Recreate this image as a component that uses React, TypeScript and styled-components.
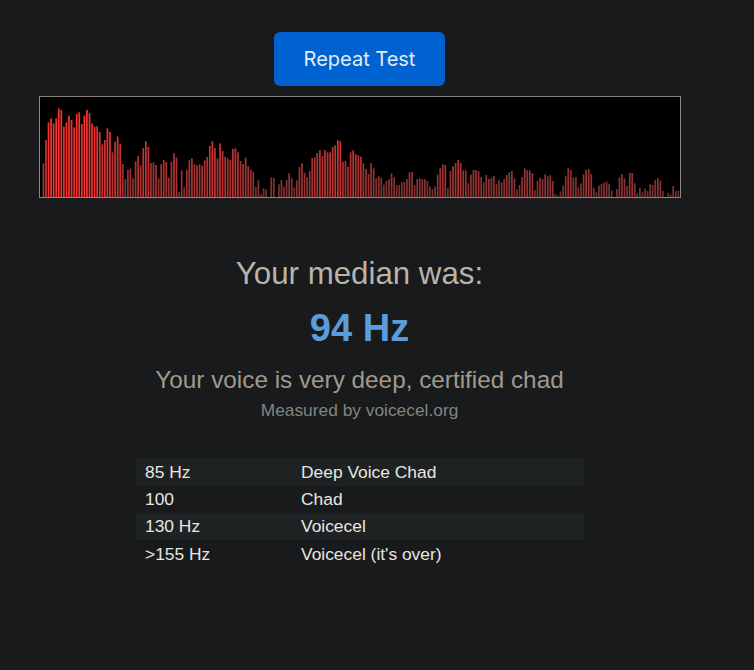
import React from "react";
import styled, { createGlobalStyle } from "styled-components";

const GlobalStyle = createGlobalStyle`
  html, body { margin: 0; padding: 0; background: #181a1b; }
  body { font-family: "Liberation Sans", Arial, sans-serif; }
`;

const tops1 = [220,150,97,85,100,85,55,60,110,97,77,90,112,72,67,102,77,60,70,100,110,109,126,163,150,115,126,187,155,139,162,222,268,239,235,265,214,198,226,174,154,171,219,217,225,265,223,210,216,264,216,189,203,306,241,292,240,211,205,223,226,223,227,211,201,167,154,174,205,160,183,200,205,210,177,175,187,213,222,203,228];
const tops2 = [238,245,291,271,312,295,298,321,262,264,321,283,270,290,270,250,265,292,271,231,220,248,262,243,204,202,189,180,198,180,187,187,171,166,150,154,215,213,230,187,181,192,196,200,220,237,252,220,235,265,259,263,284,273,268,250,262,286,285,277,275,267,247,246,285,267,265,268,268,273,289,297,289,254,235,223,225,295,243,228,219,210,219,241,241,280];
const tops3 = [254,240,240,244,261,277,255,267,263,258,282,271,277,267,255,247,243,265,298,285,261,235,241,241,249,300,272,263,267,253,259,256,273,312,317,304,287,259,235,240,263,262,292,280,253,240,237,252,294,307,287,282,278,275,281,301,321,297,262,252,265,288,249,249,280,310,294,307,296,303,283,285,270,264,271,303,321,309,313,288,303,303];
const heights = [321, ...tops1, ...tops2, ...tops3].map((t) => (321 - t) / 3);

const rows = [
  ["85 Hz", "Deep Voice Chad"],
  ["100", "Chad"],
  ["130 Hz", "Voicecel"],
  [">155 Hz", "Voicecel (it's over)"],
];

const Page = styled.main`
  width: 754px;
  height: 670px;
  overflow: hidden;
  background: #181a1b;
  display: flex;
  flex-direction: column;
  padding-top: 32px;
  box-sizing: border-box;
`;
const Centered = styled.div`
  width: 719px;
  display: flex;
  flex-direction: column;
  align-items: center;
`;
const RepeatButton = styled.button`
  width: 171px;
  height: 54px;
  border: 0;
  border-radius: 6px;
  background: #0062d1;
  color: #e3ebf3;
  font: 400 20px Inter, sans-serif;
  padding: 0;
`;
const Scope = styled.div`
  align-self: flex-start;
  margin: 10px 0 0 39px;
  width: 640px;
  height: 100px;
  border: 1px solid #8f877c;
  background: #000;
  line-height: 0;
`;
const ResultCard = styled.section`
  margin-top: 22px;
  width: 603px;
  height: 402px;
  box-sizing: border-box;
  border: 1px solid #17191a;
  border-radius: 6px;
  padding-top: 35px;
  display: flex;
  flex-direction: column;
  align-items: center;
`;
const Heading = styled.h2`
  margin: 0;
  height: 36px;
  font: 400 31.25px/36px "Liberation Sans", Arial, sans-serif;
  color: #b9b4ab;
`;
const Value = styled.div`
  margin-top: 15px;
  height: 42px;
  font: 700 38px/42px "Liberation Sans", Arial, sans-serif;
  color: #5a9cdc;
`;
const Verdict = styled.div`
  margin-top: 17px;
  height: 28px;
  font: 400 24.3px/28px "Liberation Sans", Arial, sans-serif;
  color: #a0998e;
`;
const Credit = styled.div`
  margin-top: 6px;
  height: 20px;
  font: 400 17.35px/20px "Liberation Sans", Arial, sans-serif;
  color: #808680;
`;
const Table = styled.div`
  margin-top: 38px;
  width: 448px;
  display: flex;
  flex-direction: column;
`;
const Row = styled.div<{ $striped: boolean; $h: number }>`
  display: grid;
  grid-template-columns: 165.5px 1fr;
  height: ${(p) => p.$h}px;
  align-items: center;
  background: ${(p) => (p.$striped ? "#1e2223" : "transparent")};
  font-size: 17.4px;
  color: #e8e6e3;
`;
const Cell = styled.div`
  &:first-child {
    padding-left: 9.5px;
  }
`;

export default function App() {
  const rowHeights = [28, 27, 27, 28];
  return (
    <Page>
      <GlobalStyle />
      <Centered>
        <RepeatButton>Repeat Test</RepeatButton>
        <Scope>
          <svg width="640" height="100" viewBox="0 0 640 100" aria-hidden="true">
            {heights.map((h, i) =>
              h > 0 ? (
                <rect
                  key={i}
                  x={i * 2.56}
                  y={100 - h}
                  width={1.7}
                  height={h}
                  fill={`rgb(${Math.min(255, Math.round(100 + h * 1.9))},50,50)`}
                />
              ) : null
            )}
          </svg>
        </Scope>
        <ResultCard>
          <Heading>Your median was:</Heading>
          <Value>94 Hz</Value>
          <Verdict>Your voice is very deep, certified chad</Verdict>
          <Credit>Measured by voicecel.org</Credit>
          <Table>
            {rows.map(([a, b], i) => (
              <Row key={a} $striped={i % 2 === 0} $h={rowHeights[i]}>
                <Cell>{a}</Cell>
                <Cell>{b}</Cell>
              </Row>
            ))}
          </Table>
        </ResultCard>
      </Centered>
    </Page>
  );
}
